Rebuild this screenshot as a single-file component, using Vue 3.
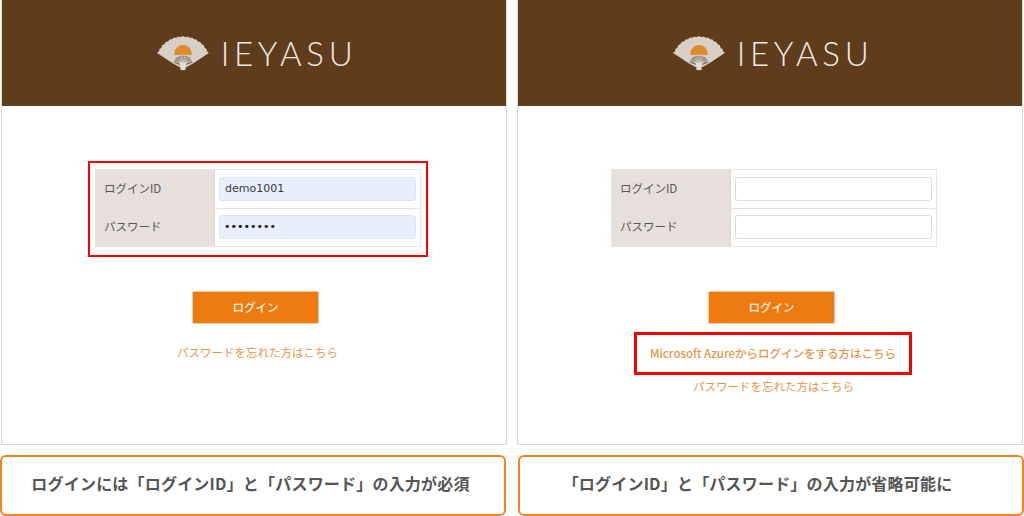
<script setup>
const panels = [
  {
    id: 'required',
    user: 'demo1001',
    pass: '••••••••',
    filled: true,
    highlightForm: true,
    caption: 'ログインには「ログインID」と「パスワード」の入力が必須',
  },
  {
    id: 'optional',
    user: '',
    pass: '',
    filled: false,
    highlightForm: false,
    caption: '「ログインID」と「パスワード」の入力が省略可能に',
  },
]

const cx = 27
const cy = 28
const polar = (deg, r) => {
  const a = (deg * Math.PI) / 180
  return `${(cx + r * Math.sin(a)).toFixed(2)} ${(cy - r * Math.cos(a)).toFixed(2)}`
}
const steps = []
for (let d = -67; d <= 67; d += 9.571) steps.push(d)
const fanOutline =
  'M' + polar(-67, 28.5) + ' ' +
  steps.slice(1).map((d) => `Q${polar(d - 4.8, 26.4)} ${polar(d, 28)}`).join(' ') +
  ' L37 27.500 L27 33 L17 27.500 Z'
const ribs = [-72, -60, -48, -36, -24, -12, 0, 12, 24, 36, 48, 60, 72]
</script>

<template>
  <main class="page">
    <section v-for="p in panels" :key="p.id" class="column">
      <div class="panel">
        <header class="brand">
          <svg class="fan" viewBox="0 0 54 35" width="54" height="35" aria-hidden="true">
            <path :d="fanOutline" fill="#d8d0c6" />
            <path d="M18.300 19 A8.800 8.800 0 1 1 35.700 19 Z" fill="#e08a2c" />
            <path d="M17.500 26.500 A10 10 0 0 1 36.500 26.500 L30 29 L24 29 Z" fill="#7d7063" />
            <g stroke="#d8d0c6" stroke-width=".7">
              <line v-for="r in ribs" :key="r" x1="27" y1="28" x2="27" y2="18" :transform="`rotate(${r} 27 28)`" />
            </g>
            <path d="M23 26 Q27 28 31 26 L29 31 L30 33.500 Q27 35 24 33.500 L25 31 Z" fill="#e4ddd3" />
          </svg>
          <span class="wordmark">IEYASU</span>
        </header>

        <div class="body">
          <div class="form-frame" :class="{ marked: p.highlightForm }">
            <div class="form">
              <div class="row">
                <div class="label">ログインID</div>
                <div class="cell">
                  <div class="input" :class="{ filled: p.filled }">{{ p.user }}</div>
                </div>
              </div>
              <div class="row">
                <div class="label">パスワード</div>
                <div class="cell">
                  <div class="input secret" :class="{ filled: p.filled }">{{ p.pass }}</div>
                </div>
              </div>
            </div>
          </div>

          <button class="login" type="button">ログイン</button>

          <div v-if="!p.filled" class="azure">Microsoft Azureからログインをする方はこちら</div>
          <a class="forgot" :class="{ tight: !p.filled }">パスワードを忘れた方はこちら</a>
        </div>
      </div>

      <div class="caption">{{ p.caption }}</div>
    </section>
  </main>
</template>

<style>
html, body { margin: 0; background: #fff; }
</style>

<style scoped>
.page {
  width: 1024px;
  height: 516px;
  overflow: hidden;
  box-sizing: border-box;
  padding: 0 0 0 1px;
  display: grid;
  grid-template-columns: 506px 506px;
  column-gap: 10px;
  font-family: "Noto Sans CJK JP", "Noto Sans", sans-serif;
  background: #fff;
}
.column {
  display: flex;
  flex-direction: column;
  gap: 10px;
}
.panel {
  height: 445px;
  box-sizing: border-box;
  border: 1px solid #d9d9d9;
  border-top: 0;
  display: flex;
  flex-direction: column;
}
.brand {
  height: 106px;
  background: #5f3c1c;
  display: flex;
  align-items: center;
  justify-content: center;
  gap: 11px;
  padding-left: 5px;
  box-sizing: border-box;
}
.fan { flex: none; }
.wordmark {
  font-family: Lato, "Open Sans", sans-serif;
  font-weight: 300;
  font-size: 33px;
  line-height: 34px;
  letter-spacing: 4.700px;
  color: #efeae3;
}
.body {
  display: flex;
  flex-direction: column;
  align-items: center;
  padding-top: 55px;
  padding-left: 8px;
}
.form-frame {
  box-sizing: border-box;
  width: 340px;
  height: 96px;
  padding: 6px 5px;
  border: 2px solid transparent;
}
.form-frame.marked { border-color: #f60000; }
.form {
  border: 1px solid #e6e6e6;
  display: flex;
  flex-direction: column;
  height: 78px;
  box-sizing: border-box;
}
.row {
  flex: 1;
  display: flex;
}
.row + .row { border-top: 1px solid #e6e2df; }
.label {
  width: 119px;
  flex: none;
  box-sizing: border-box;
  padding: 0 0 2px 8px;
  display: flex;
  align-items: center;
  background: #e6dfdb;
  border-right: 1px solid #dcd5d0;
  font-size: 11.500px;
  color: #5c5654;
}
.cell {
  flex: 1;
  display: flex;
  align-items: center;
  padding: 0 4px;
}
.input {
  width: 100%;
  height: 24px;
  box-sizing: border-box;
  border: 1px solid #dcdcdc;
  border-radius: 3px;
  background: #fff;
  padding-left: 5px;
  font-family: "DejaVu Sans", sans-serif;
  font-size: 11px;
  line-height: 22px;
  color: #3a3a3a;
}
.input.filled {
  background: #e6effb;
  border-color: #e0e6ee;
}
.input.secret {
  color: #111;
  padding-left: 4px;
}
.login {
  display: block;
  width: 127px;
  height: 33px;
  margin-top: 34px;
  margin-right: 5px;
  padding: 0 0 2px;
  border: 1px solid #e8c9a5;
  border-radius: 2px;
  background: #ee7b10;
  color: #fbeee0;
  font-family: inherit;
  font-size: 11.500px;
  font-weight: 500;
}
.azure {
  box-sizing: border-box;
  width: 278px;
  height: 43px;
  margin-top: 8px;
  margin-right: 2px;
  padding-bottom: 2px;
  border: 3px solid #f60000;
  display: flex;
  align-items: center;
  justify-content: center;
  font-size: 11.500px;
  font-weight: 500;
  color: #e8954a;
  white-space: nowrap;
}
.forgot {
  margin-top: 18px;
  margin-right: 1px;
  font-size: 11.500px;
  line-height: 20px;
  color: #e8954a;
  white-space: nowrap;
}
.forgot.tight { margin-top: 1px; }
.caption {
  height: 61px;
  box-sizing: border-box;
  border: 2px solid #f5811f;
  border-radius: 6px;
  padding: 0 5px 5px 0;
  display: flex;
  align-items: center;
  justify-content: center;
  font-size: 16px;
  font-weight: 700;
  letter-spacing: .2px;
  text-spacing-trim: space-all;
  color: #555;
  white-space: nowrap;
  margin: 0 1px 0 -1px;
}
.column + .column .caption {
  margin: 0 -1px 0 1px;
  padding-right: 27px;
}
</style>
